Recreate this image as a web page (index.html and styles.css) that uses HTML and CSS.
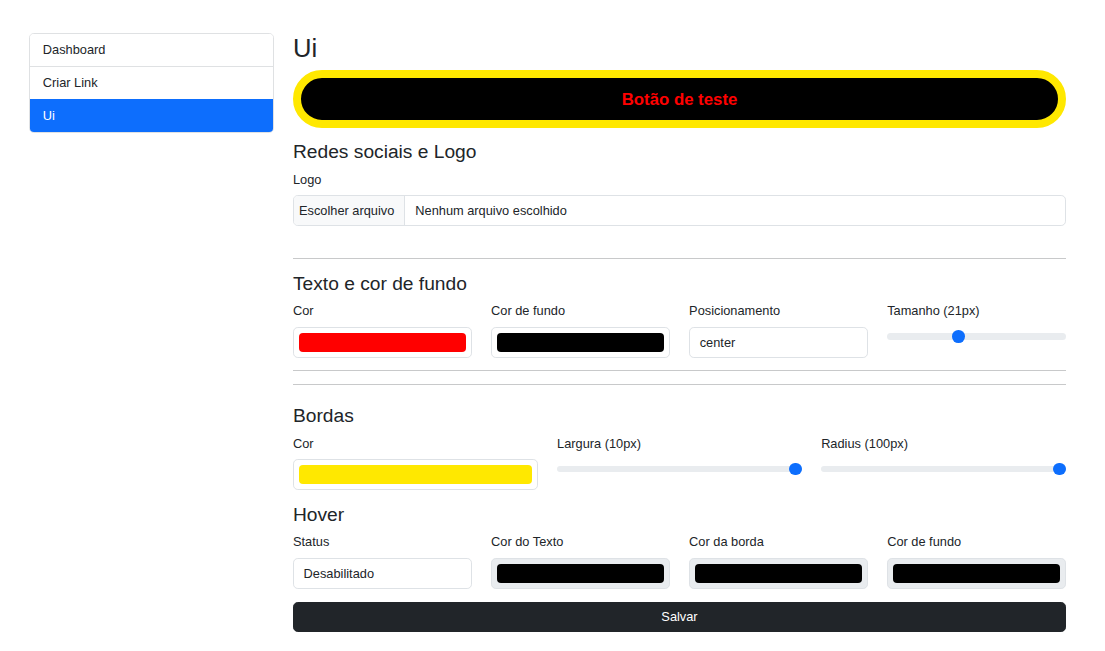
FILE: index.html
```html
<!DOCTYPE html>
<html lang="pt-BR">
<head>
<meta charset="utf-8">
<title>Ui</title>
<link rel="stylesheet" href="styles.css">
</head>
<body>
<div class="page">
  <nav class="list-group">
    <a class="list-item">Dashboard</a>
    <a class="list-item">Criar Link</a>
    <a class="list-item active">Ui</a>
  </nav>
  <main class="content">
    <h2 class="title">Ui</h2>
    <button class="test-btn">Botão de teste</button>

    <section class="sec sec-social">
      <h4 class="sec-title">Redes sociais e Logo</h4>
      <label class="form-label">Logo</label>
      <div class="file-input"><span class="file-btn">Escolher arquivo</span><span class="file-name">Nenhum arquivo escolhido</span></div>
    </section>

    <hr class="divider">

    <section class="sec">
      <h4 class="sec-title">Texto e cor de fundo</h4>
      <div class="grid grid-4">
        <div class="field">
          <label class="form-label">Cor</label>
          <div class="color-box"><span class="swatch swatch-red"></span></div>
        </div>
        <div class="field">
          <label class="form-label">Cor de fundo</label>
          <div class="color-box"><span class="swatch swatch-black"></span></div>
        </div>
        <div class="field">
          <label class="form-label">Posicionamento</label>
          <div class="text-box">center</div>
        </div>
        <div class="field">
          <label class="form-label">Tamanho (21px)</label>
          <div class="range"><div class="track"></div><span class="thumb" style="left: calc((100% - 12.8px) * 0.389)"></span></div>
        </div>
      </div>
    </section>

    <hr class="divider">
    <hr class="divider">

    <section class="sec sec-borders">
      <h4 class="sec-title">Bordas</h4>
      <div class="grid grid-3">
        <div class="field">
          <label class="form-label">Cor</label>
          <div class="color-box"><span class="swatch swatch-yellow"></span></div>
        </div>
        <div class="field">
          <label class="form-label">Largura (10px)</label>
          <div class="range"><div class="track"></div><span class="thumb" style="left: calc((100% - 12.8px) * 1)"></span></div>
        </div>
        <div class="field">
          <label class="form-label">Radius (100px)</label>
          <div class="range"><div class="track"></div><span class="thumb" style="left: calc((100% - 12.8px) * 1)"></span></div>
        </div>
      </div>
    </section>

    <section class="sec sec-hover">
      <h4 class="sec-title">Hover</h4>
      <div class="grid grid-4">
        <div class="field">
          <label class="form-label">Status</label>
          <div class="text-box">Desabilitado</div>
        </div>
        <div class="field">
          <label class="form-label">Cor do Texto</label>
          <div class="color-box disabled"><span class="swatch swatch-black"></span></div>
        </div>
        <div class="field">
          <label class="form-label">Cor da borda</label>
          <div class="color-box disabled"><span class="swatch swatch-black"></span></div>
        </div>
        <div class="field">
          <label class="form-label">Cor de fundo</label>
          <div class="color-box disabled"><span class="swatch swatch-black"></span></div>
        </div>
      </div>
    </section>

    <button class="save-btn">Salvar</button>
  </main>
</div>
</body>
</html>
```
FILE: styles.css
```css
* { box-sizing: border-box; }

html, body {
  margin: 0;
  padding: 0;
  background: #fff;
}

body {
  font-family: "Liberation Sans", Arial, sans-serif;
  font-size: 12.8px;
  line-height: 1.5;
  color: #212529;
}

.page {
  display: flex;
  align-items: flex-start;
  gap: 19px;
  padding: 33px 0 0 29px;
}

/* Sidebar */
.list-group {
  display: flex;
  flex-direction: column;
  width: 245px;
  flex: 0 0 245px;
  border: 1px solid #dfe1e3;
  border-radius: 4.8px;
  overflow: hidden;
}

.list-item {
  display: block;
  padding: 6.4px 12.8px;
  line-height: 19.2px;
  height: 33px;
  color: #212529;
  text-decoration: none;
  background: #fff;
  border-top: 1px solid #dfe1e3;
}

.list-item:first-child { border-top: 0; height: 32px; }

.list-item.active {
  background: #0d6efd;
  border-top-color: #0d6efd;
  color: #fff;
}

/* Main */
.content {
  width: 773px;
  flex: 0 0 773px;
}

.title {
  margin: 0 0 6.4px;
  font-size: 25.6px;
  line-height: 1.2;
  font-weight: 500;
}

.test-btn {
  display: block;
  width: 100%;
  height: 58px;
  margin: 0 0 12px;
  padding: 0;
  border: 8px solid #ffe800;
  border-radius: 80px;
  background: #000;
  color: #ff0000;
  font-family: "Liberation Sans", Arial, sans-serif;
  font-weight: bold;
  font-size: 16.8px;
  line-height: 25px;
}

.sec-title {
  margin: 0 0 6.4px;
  font-size: 19.2px;
  line-height: 1.2;
  font-weight: 500;
}

.form-label {
  display: block;
  margin-bottom: 6.4px;
  line-height: 19.2px;
}

.sec-social { margin-bottom: 32px; }

.file-input {
  display: flex;
  align-items: center;
  height: 30.8px;
  border: 1px solid #dee2e6;
  border-radius: 4.8px;
  overflow: hidden;
}

.file-btn {
  display: flex;
  align-items: center;
  height: 100%;
  padding: 0 9.6px 0 5px;
  background: #f8f9fa;
  border-right: 1px solid #dee2e6;
}

.file-name { padding-left: 10.4px; }

.divider {
  margin: 12.8px 0;
  border: 0;
  border-top: 1px solid #c8c9ca;
  height: 0;
}

.grid {
  display: grid;
  column-gap: 19.2px;
}

.grid-4 { grid-template-columns: repeat(4, 1fr); }
.grid-3 { grid-template-columns: repeat(3, 1fr); }

.color-box {
  display: flex;
  height: 30.8px;
  padding: 4.8px;
  border: 1px solid #dee2e6;
  border-radius: 4.8px;
  background: #fff;
}

.color-box.disabled { background: #e9ecef; }

.swatch {
  flex: 1;
  border-radius: 4px;
}

.swatch-red { background: #ff0000; }
.swatch-black { background: #000; }
.swatch-yellow { background: #ffe800; }

.text-box {
  height: 30.8px;
  padding: 4.8px 9.6px;
  line-height: 19.2px;
  border: 1px solid #dee2e6;
  border-radius: 4.8px;
  background: #fff;
}

.range {
  position: relative;
  height: 19.2px;
  display: flex;
  align-items: center;
}

.track {
  width: 100%;
  height: 6.4px;
  border-radius: 12.8px;
  background: #e9ecef;
}

.thumb {
  position: absolute;
  top: 3.2px;
  width: 12.8px;
  height: 12.8px;
  border-radius: 50%;
  background: #0d6efd;
}

.sec-borders .sec-title { margin-top: 19.2px; }

.sec-hover { margin-top: 12.8px; }

.save-btn {
  display: block;
  width: 100%;
  height: 30.8px;
  margin-top: 12.8px;
  padding: 0;
  border: 1px solid #212529;
  border-radius: 4.8px;
  background: #212529;
  color: #fff;
  font-family: "Liberation Sans", Arial, sans-serif;
  font-size: 12.8px;
  line-height: 19.2px;
}
```
